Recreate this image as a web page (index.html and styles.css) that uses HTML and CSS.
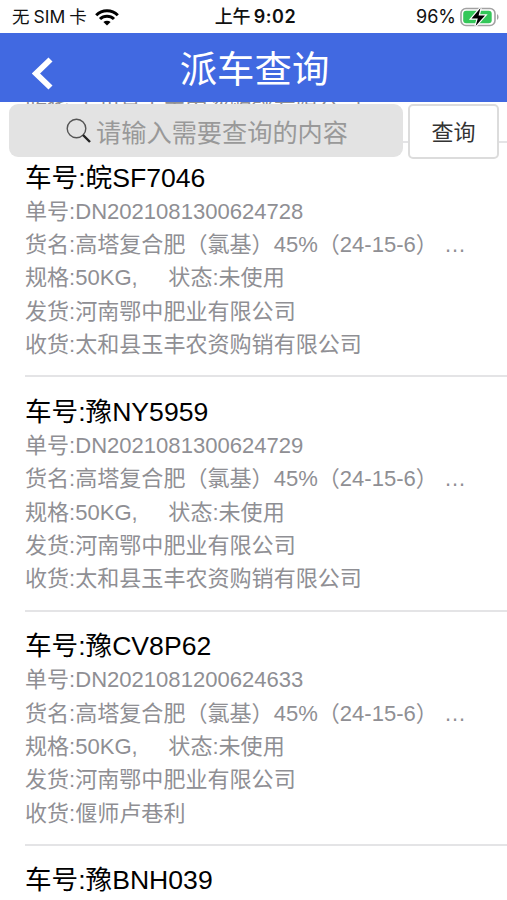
FILE: index.html
```
<!DOCTYPE html>
<html lang="zh-CN">
<head>
  <meta charset="UTF-8">
  <title>派车查询</title>
  <link rel="stylesheet" href="styles.css">
</head>
<body>
<div class="status-bar">
  <div class="carrier">
    <span class="carrier-name">无<span class="sim">SIM</span>卡</span>
    <svg class="wifi" width="24" height="17" viewBox="0 0 24 17">
      <path d="M1.2 6.2a15.4 15.4 0 0 1 21.6 0M5 10a10 10 0 0 1 14 0" fill="none" stroke="#000" stroke-width="3"/>
      <path d="M12 16.6l-3.6-3.5a5.2 5.2 0 0 1 7.2 0z"/>
    </svg>
  </div>
  <div class="time">上午<span class="clock">9:02</span></div>
  <div class="battery">
    <span class="percent">96%</span>
    <svg width="39" height="20" viewBox="0 0 39 20">
      <rect x="1" y="1.5" width="34" height="17" rx="5" fill="#fff" stroke="#a2a2a2" stroke-width="1.6"/>
      <rect x="3.2" y="3.7" width="28.5" height="12.6" rx="3" fill="#34c759"/>
      <path d="M37 7v6q1.6-.8 1.6-3t-1.6-3z" fill="#a2a2a2"/>
      <path d="M20.500 1l-9 10.500h6.300l-2.200 7.500 9.400-10.500h-6.400z" stroke="#fff" stroke-width="2.400" paint-order="stroke"/>
    </svg>
  </div>
</div>

<header class="nav-bar">
  <svg class="back" width="22" height="33" viewBox="0 0 22 33">
    <path d="M18.500 2.500L4 16.500l14.500 14" fill="none" stroke="#fff" stroke-width="5.800"/>
  </svg>
  <h1>派车查询</h1>
</header>

<main>
  <div class="search-bar">
    <div class="search-input">
      <svg width="26" height="26" viewBox="0 0 26 26">
        <circle cx="10.500" cy="10.500" r="9.300" fill="none" stroke="#555" stroke-width="1.400"/>
        <path d="M17 17l7 7" stroke="#222" stroke-width="2.400"/>
      </svg>
      <span>请输入需要查询的内容</span>
    </div>
    <button type="button" class="search-button">查询</button>
  </div>

  <ul class="list">
    <li class="item item-cut">
      <p>收货:太和县玉丰农资购销有限公司</p>
    </li>
    <li class="item">
      <h2>车号:皖SF7046</h2>
      <p>单号:DN2021081300624728</p>
      <p>货名:高塔复合肥（氯基）45%（24-15-6） …</p>
      <p>规格:50KG,&nbsp;&nbsp;&nbsp;&nbsp;&nbsp;状态:未使用</p>
      <p>发货:河南鄂中肥业有限公司</p>
      <p>收货:太和县玉丰农资购销有限公司</p>
    </li>
    <li class="item">
      <h2>车号:豫NY5959</h2>
      <p>单号:DN2021081300624729</p>
      <p>货名:高塔复合肥（氯基）45%（24-15-6） …</p>
      <p>规格:50KG,&nbsp;&nbsp;&nbsp;&nbsp;&nbsp;状态:未使用</p>
      <p>发货:河南鄂中肥业有限公司</p>
      <p>收货:太和县玉丰农资购销有限公司</p>
    </li>
    <li class="item">
      <h2>车号:豫CV8P62</h2>
      <p>单号:DN2021081200624633</p>
      <p>货名:高塔复合肥（氯基）45%（24-15-6） …</p>
      <p>规格:50KG,&nbsp;&nbsp;&nbsp;&nbsp;&nbsp;状态:未使用</p>
      <p>发货:河南鄂中肥业有限公司</p>
      <p>收货:偃师卢巷利</p>
    </li>
    <li class="item">
      <h2>车号:豫BNH039</h2>
    </li>
  </ul>
</main>
</body>
</html>
```
FILE: styles.css
```
* {
  box-sizing: border-box;
}

body {
  margin: 0;
  height: 900px;
  display: flex;
  flex-direction: column;
  overflow: hidden;
  background-color: #fff;
  font-family: "Liberation Sans", "Noto Sans CJK SC", sans-serif;
}

.status-bar {
  height: 33px;
  flex: none;
  display: grid;
  grid-template-columns: 1fr auto 1fr;
  align-items: center;
  padding: 1px 8px 0 12px;
  font-family: Inter, "Noto Sans CJK SC", sans-serif;
  font-size: 18px;
  line-height: 32px;
  color: #111;
}

.carrier,
.battery {
  display: flex;
  align-items: center;
}

.carrier {
  gap: 8px;
}

.carrier-name {
  font-size: 17.5px;
}

.sim {
  margin: 0 4px;
}

.time {
  font-weight: 500;
}

.clock {
  margin-left: 3px;
  font-weight: 600;
  letter-spacing: 0.6px;
}

.battery {
  justify-content: flex-end;
  gap: 4px;
}

.nav-bar {
  height: 69px;
  flex: none;
  display: flex;
  align-items: center;
  background-color: #4169e1;
  color: #fff;
}

.back {
  margin: 12px 0 0 32px;
}

.nav-bar h1 {
  flex: 1;
  margin: 0 52px 0 0;
  padding-top: 6px;
  text-align: center;
  font-size: 37.4px;
  font-weight: 400;
  line-height: 63px;
}

main {
  position: relative;
  flex: 1;
  overflow: hidden;
}

.search-bar {
  position: absolute;
  top: 2px;
  left: 9px;
  right: 8px;
  display: flex;
  gap: 5px;
}

.search-input {
  flex: 1;
  height: 53px;
  display: flex;
  justify-content: center;
  align-items: center;
  gap: 4px;
  padding-left: 2px;
  border-radius: 9px;
  background-color: #e3e3e3;
  color: #999;
  font-size: 25.2px;
}

.search-button {
  width: 91px;
  height: 55px;
  padding: 0 0 3px;
  border: 2px solid #dcdcdc;
  border-radius: 5px;
  background-color: #fff;
  color: #333;
  font-family: inherit;
  font-size: 22px;
}

.list {
  margin: 0;
  padding: 0 0 0 25px;
  list-style: none;
}

.item {
  height: 234.3px;
  padding-top: 18.500px;
  border-bottom: 2px solid #e4e4e6;
}

.item-cut {
  height: 41px;
  padding-top: 0;
  display: flex;
  flex-direction: column;
  justify-content: flex-end;
  padding-bottom: 15px;
}

.item h2 {
  margin: 0;
  font-size: 26.6px;
  font-weight: 400;
  line-height: 33.3px;
  color: #000;
}

.item p {
  margin: 0;
  font-size: 22.05px;
  line-height: 33.3px;
  color: #8f8f94;
  white-space: nowrap;
}
```
